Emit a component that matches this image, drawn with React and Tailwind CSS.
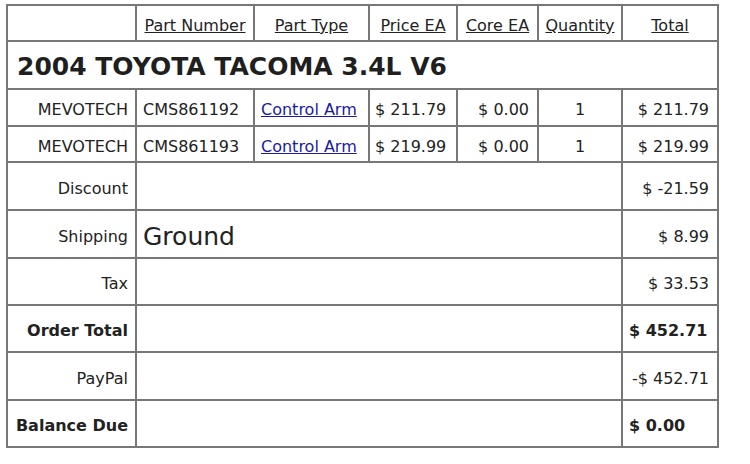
export default function App() {
  const cell = "bg-white flex items-center px-2 pt-[5px] whitespace-nowrap";
  const head = "bg-white flex items-center justify-center underline pt-[6px] whitespace-nowrap";
  const link = "text-[#1a1aa6] underline";
  const summary = [
    { label: "Discount", mid: "", value: "$ -21.59", bold: false },
    { label: "Shipping", mid: "Ground", value: "$ 8.99", bold: false },
    { label: "Tax", mid: "", value: "$ 33.53", bold: false },
    { label: "Order Total", mid: "", value: "$ 452.71", bold: true },
    { label: "PayPal", mid: "", value: "-$ 452.71", bold: false },
    { label: "Balance Due", mid: "", value: "$ 0.00", bold: true },
  ];
  const items = [
    { brand: "MEVOTECH", num: "CMS861192", price: "$ 211.79", total: "$ 211.79" },
    { brand: "MEVOTECH", num: "CMS861193", price: "$ 219.99", total: "$ 219.99" },
  ];
  return (
    <div className="w-[750px] h-[464px] bg-white pt-[4px] pl-[6px] text-[16px] text-[#222] font-['DejaVu_Sans',Verdana,sans-serif]">
      <div className="w-[713px] grid grid-cols-[127px_116px_113px_86px_79px_82px_94px] grid-rows-[34px_46px_35px_34px_46px_46px_45px_45px_46px_45px] gap-[2px] bg-[#777] border-2 border-[#777]">
        <div className="bg-white"></div>
        <div className={head}>Part Number</div>
        <div className={head}>Part Type</div>
        <div className={head}>Price EA</div>
        <div className={head}>Core EA</div>
        <div className={head}>Quantity</div>
        <div className={head}>Total</div>

        <div className="col-span-7 bg-white flex items-center px-[9px] pt-[4px] text-[25px] font-bold text-[#1f1f1f] whitespace-nowrap">
          2004 TOYOTA TACOMA 3.4L V6
        </div>

        {items.map((it) => (
          <div key={it.num} className="contents">
            <div className={cell + " justify-end pr-[7px]"}>{it.brand}</div>
            <div className={cell + " px-[6px]"}>{it.num}</div>
            <div className={cell + " px-[6px]"}>
              <span className={link}>Control Arm</span>
            </div>
            <div className={cell + " px-[5px]"}>{it.price}</div>
            <div className={cell + " justify-end pr-[8px]"}>$ 0.00</div>
            <div className={cell + " justify-center"}>1</div>
            <div className={cell + " justify-end pr-[8px]"}>{it.total}</div>
          </div>
        ))}

        {summary.map((s) => (
          <div key={s.label} className="contents">
            <div className={cell + " justify-end pl-[2px] pr-[7px]" + (s.bold ? " font-bold" : "")}>{s.label}</div>
            <div className={"col-span-5 " + cell + " px-[6px] text-[25px]"}>{s.mid}</div>
            <div
              className={
                cell +
                (s.bold ? " justify-start pl-[6px] font-bold" : " justify-end pr-[8px]")
              }
            >
              {s.value}
            </div>
          </div>
        ))}
      </div>
    </div>
  );
}
